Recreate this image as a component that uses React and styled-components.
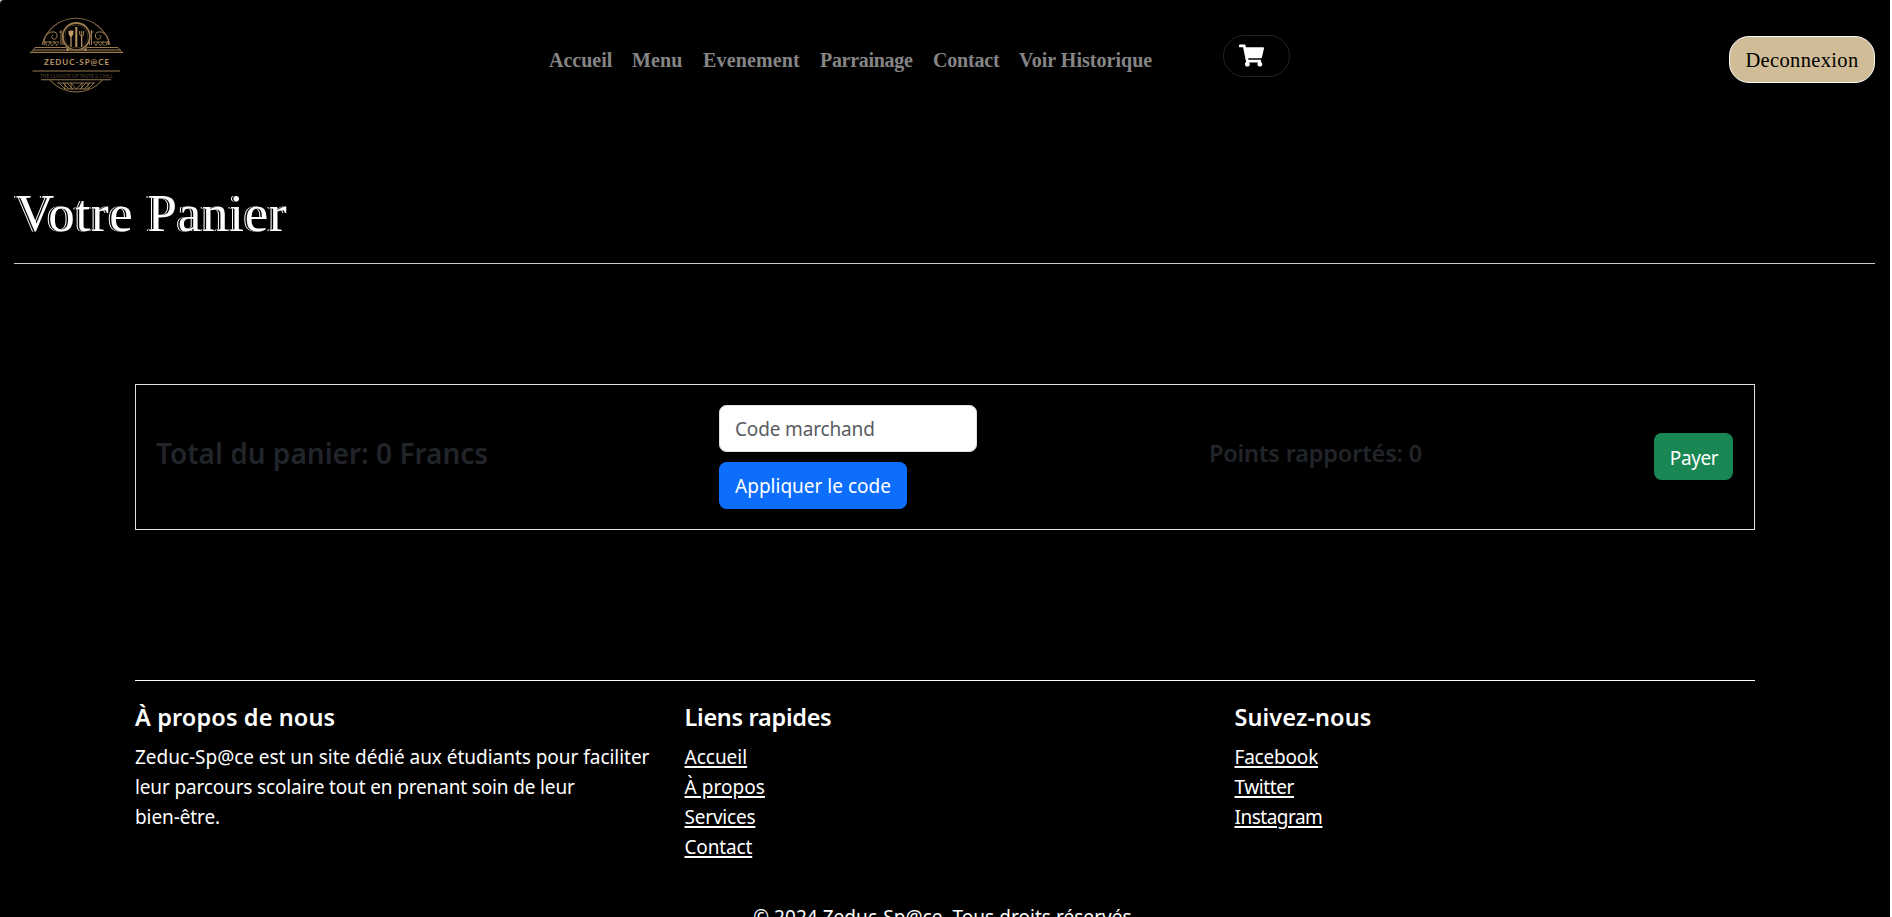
import React from "react";
import styled, { createGlobalStyle } from "styled-components";
import { FaShoppingCart } from "react-icons/fa";

const GlobalStyle = createGlobalStyle`
  * { box-sizing: border-box; }
  html, body { margin: 0; background: #fff; overflow: hidden; }
  h1, h2, p, ul { margin: 0; padding: 0; }
`;

const sans = '"Noto Sans", "Open Sans", sans-serif';
const serif = '"Liberation Serif", "Times New Roman", serif';

const Backdrop = styled.div`
  background: linear-gradient(135deg, #b8d8e4 0 20px, #fff 20px);
`;

const Page = styled.div`
  width: 1890px;
  height: 917px;
  overflow: hidden;
  background: #000;
  color: #fff;
  border-top-left-radius: 4px;
  font: 400 19px/30px ${sans};
`;

const Navbar = styled.header`
  display: flex;
  align-items: flex-start;
  height: 112px;
  padding: 12px 15px 0 26px;
`;

const Logo = styled.svg`
  flex: none;
  width: 100px;
  height: 86px;
`;

const NavLinks = styled.nav`
  display: flex;
  align-items: baseline;
  margin: 33px 0 0 423px;
  gap: 20px;
`;

const NavLink = styled.a`
  width: ${(p) => p.$w}px;
  color: #858585;
  font: 700 20px/30px ${serif};
  letter-spacing: ${(p) => p.$track}px;
  white-space: nowrap;
`;

const CartButton = styled.button`
  display: flex;
  align-items: center;
  width: 67px;
  height: 42px;
  margin: 23px 0 0 69px;
  padding: 0 0 1px 15px;
  border: 1px solid #212529;
  border-radius: 21px;
  background: transparent;
  color: #fff;
  font-size: 25px;
`;

const LogoutButton = styled.button`
  width: 146px;
  height: 47px;
  margin: 24px 0 0 auto;
  padding: 0;
  border: 1px solid #f8f9fa;
  border-radius: 20px;
  background: #d0bd97;
  color: #000;
  font: 400 20.5px/30px ${serif};
  letter-spacing: 0.35px;
`;

const TitleBar = styled.section`
  margin: 0 15px 0 14px;
  height: 152px;
  padding: 71px 0 0 2px;
  border-bottom: 1px solid #c9c9c9;
`;

const Title = styled.h1`
  font: 400 53px/60px ${serif};
  letter-spacing: 0.75px;
  text-shadow: -1.5px 0 #000, -2.5px 0 #fff;
`;

const CartSummary = styled.section`
  display: flex;
  align-items: flex-start;
  width: 1620px;
  height: 146px;
  margin: 120px 0 0 135px;
  padding: 20px 21px 0 20px;
  border: 1px solid #dee2e6;
`;

const Total = styled.h2`
  width: 563px;
  margin-top: 30px;
  color: #212529;
  font: 600 28px/36px ${sans};
`;

const Points = styled.p`
  margin-top: 32px;
  color: #212529;
  font: 600 23.5px/32px ${sans};
  letter-spacing: -0.17px;
`;

const CodeForm = styled.form`
  display: flex;
  flex-direction: column;
  align-items: flex-start;
  gap: 10px;
  width: 490px;
`;

const CodeInput = styled.input`
  width: 258px;
  height: 47px;
  padding: 0 15px;
  border: 1px solid #dee2e6;
  border-radius: 7.5px;
  background: #fff;
  font: 400 19px/30px ${sans};
  letter-spacing: -0.15px;
  &::placeholder { color: #595c5f; opacity: 1; }
`;

const Button = styled.button`
  width: ${(p) => p.$w}px;
  height: 47px;
  padding: ${(p) => (p.$success ? "2px 0 0 1px" : "0")};
  border: 0;
  border-radius: 7.5px;
  background: ${(p) => (p.$success ? "#198754" : "#0d6efd")};
  color: #fff;
  font: 400 19px/30px ${sans};
  letter-spacing: ${(p) => (p.$success ? -0.4 : 0)}px;
  white-space: nowrap;
`;

const PaySlot = styled.div`
  margin: 28px 0 0 auto;
`;

const Footer = styled.footer`
  width: 1620px;
  margin: 150px 0 0 135px;
  border-top: 1px solid #fff;
`;

const FooterColumns = styled.div`
  display: grid;
  grid-template-columns: 549.5px 550px 520px;
  padding-top: 21px;
`;

const FooterHeading = styled.h2`
  margin-bottom: 10px;
  font: 600 23.5px/30px ${sans};
  letter-spacing: ${(p) => p.$track || 0}px;
`;

const AboutLine = styled.span`
  display: block;
  letter-spacing: ${(p) => p.$track}px;
  white-space: nowrap;
`;

const LinkList = styled.ul`
  list-style: none;
`;

const FooterLink = styled.a`
  color: #fff;
  text-decoration: underline;
  text-decoration-thickness: 2px;
  text-underline-offset: 2px;
  letter-spacing: ${(p) => p.$track}px;
`;

const Copyright = styled.p`
  margin-top: 40px;
  text-align: center;
  letter-spacing: 0.04px;
`;

const navItems = [
  ["Accueil", 63, 0],
  ["Menu", 51, 0.1],
  ["Evenement", 97, 0.15],
  ["Parrainage", 93, -0.3],
  ["Contact", 66, -0.2],
  ["Voir Historique", 135, 0.03],
];

const aboutLines = [
  ["Zeduc-Sp@ce est un site dédié aux étudiants pour faciliter", -0.03],
  ["leur parcours scolaire tout en prenant soin de leur", -0.15],
  ["bien-être.", -0.1],
];

const linkColumns = [
  ["Liens rapides", -0.3, [["Accueil", 0], ["À propos", 0.05], ["Services", -0.2], ["Contact", -0.15]]],
  ["Suivez-nous", 0.1, [["Facebook", -0.2], ["Twitter", -0.4], ["Instagram", -0.5]]],
];

const Scroll = () => (
  <g>
    <path d="M18 33Q17 23 25 20Q32 19 31 25Q29 29 26 26Q25 24 27 23" />
    <path d="M35 18V33M33 20H36M37 24V33" />
    <path d="M17 30H33M18 33L21 30M22 34L25 30M26 34L29 30M30 34L33 30M18 28L21 34M23 29L26 34M28 29L31 34" opacity=".8" />
  </g>
);

function Emblem() {
  return (
    <Logo viewBox="0 0 100 86" fill="none" stroke="#9a7b50" strokeWidth="1">
      <path d="M16 33A35 35 0 0 1 84 33" strokeWidth="1.1" opacity=".8" />
      <Scroll />
      <g transform="translate(100.5 0) scale(-1 1)"><Scroll /></g>
      <circle cx="50.3" cy="24.5" r="13.5" strokeWidth="1.8" />
      <circle cx="50.3" cy="24.5" r="11.5" strokeWidth=".5" opacity=".7" />
      <path d="M45 24V35M55.7 24V35" stroke="#c79e66" strokeWidth="1.2" />
      <path d="M43 19H47V22Q45 27 43 22Z" fill="#c79e66" stroke="#c79e66" strokeWidth=".8" />
      <path d="M53.7 19V22Q55.7 27 57.7 22V19M55.7 19V24" stroke="#a98657" strokeWidth="1" />
      <path d="M50.3 15V35" stroke="#b8925f" strokeWidth="2" />
      <path d="M9 35.5H40L43 38H58L61 35.5H92" strokeWidth="1.1" />
      <path d="M9 35.5L6 39.5M92 35.5L95 39.5" strokeWidth="1" />
      <path d="M7 38H95" stroke="#6f5a3c" strokeWidth="1.4" />
      <path d="M4 40.3H97" strokeWidth="1.2" />
      <circle cx="41.5" cy="38" r="1" fill="#d0a66e" stroke="none" />
      <circle cx="59.5" cy="38" r="1" fill="#d0a66e" stroke="none" />
      <text x="50.5" y="53" fill="#bd9867" stroke="none" fontFamily="Lato, sans-serif" fontWeight="700" fontSize="8" textAnchor="middle" textLength="65">ZEDUC-SP@CE</text>
      <path d="M6.5 59H94" strokeWidth="1.2" />
      <path d="M15 67.7H85" strokeWidth="1.1" />
      <text x="50.5" y="65.6" fill="#54462f" stroke="none" fontFamily="Lato, sans-serif" fontSize="4.8" textAnchor="middle" textLength="73">THE CLIMATE OF TASTE &amp; CHILL</text>
      <path d="M24 68A35 35 0 0 0 76.5 68" strokeWidth="1.1" opacity=".85" />
      <path d="M31 71H69M33 71L39 77M37 71L43 77M41 71L47 77M45 71L50.3 77L56 71M60 71L54 77M64 71L58 77M68 71L62 77M39 71V77M45 71V77M56 71V77M62 71V77M38 77H63" strokeWidth=".9" />
    </Logo>
  );
}

export default function App() {
  return (
    <Backdrop>
      <GlobalStyle />
      <Page>
        <Navbar>
          <Emblem />
          <NavLinks>
            {navItems.map(([label, w, track]) => (
              <NavLink key={label} $w={w} $track={track}>{label}</NavLink>
            ))}
          </NavLinks>
          <CartButton aria-label="Panier"><FaShoppingCart /></CartButton>
          <LogoutButton>Deconnexion</LogoutButton>
        </Navbar>
        <TitleBar><Title>Votre Panier</Title></TitleBar>
        <CartSummary>
          <Total>Total du panier: 0 Francs</Total>
          <CodeForm>
            <CodeInput placeholder="Code marchand" />
            <Button type="button" $w={188}>Appliquer le code</Button>
          </CodeForm>
          <Points>Points rapportés: 0</Points>
          <PaySlot><Button $success $w={79}>Payer</Button></PaySlot>
        </CartSummary>
        <Footer>
          <FooterColumns>
            <div>
              <FooterHeading $track={0.12}>À propos de nous</FooterHeading>
              <p>
                {aboutLines.map(([line, track]) => (
                  <AboutLine key={line} $track={track}>{line}</AboutLine>
                ))}
              </p>
            </div>
            {linkColumns.map(([heading, headingTrack, links]) => (
              <div key={heading}>
                <FooterHeading $track={headingTrack}>{heading}</FooterHeading>
                <LinkList>
                  {links.map(([label, track]) => (
                    <li key={label}><FooterLink $track={track}>{label}</FooterLink></li>
                  ))}
                </LinkList>
              </div>
            ))}
          </FooterColumns>
          <Copyright>© 2024 Zeduc-Sp@ce. Tous droits réservés.</Copyright>
        </Footer>
      </Page>
    </Backdrop>
  );
}
